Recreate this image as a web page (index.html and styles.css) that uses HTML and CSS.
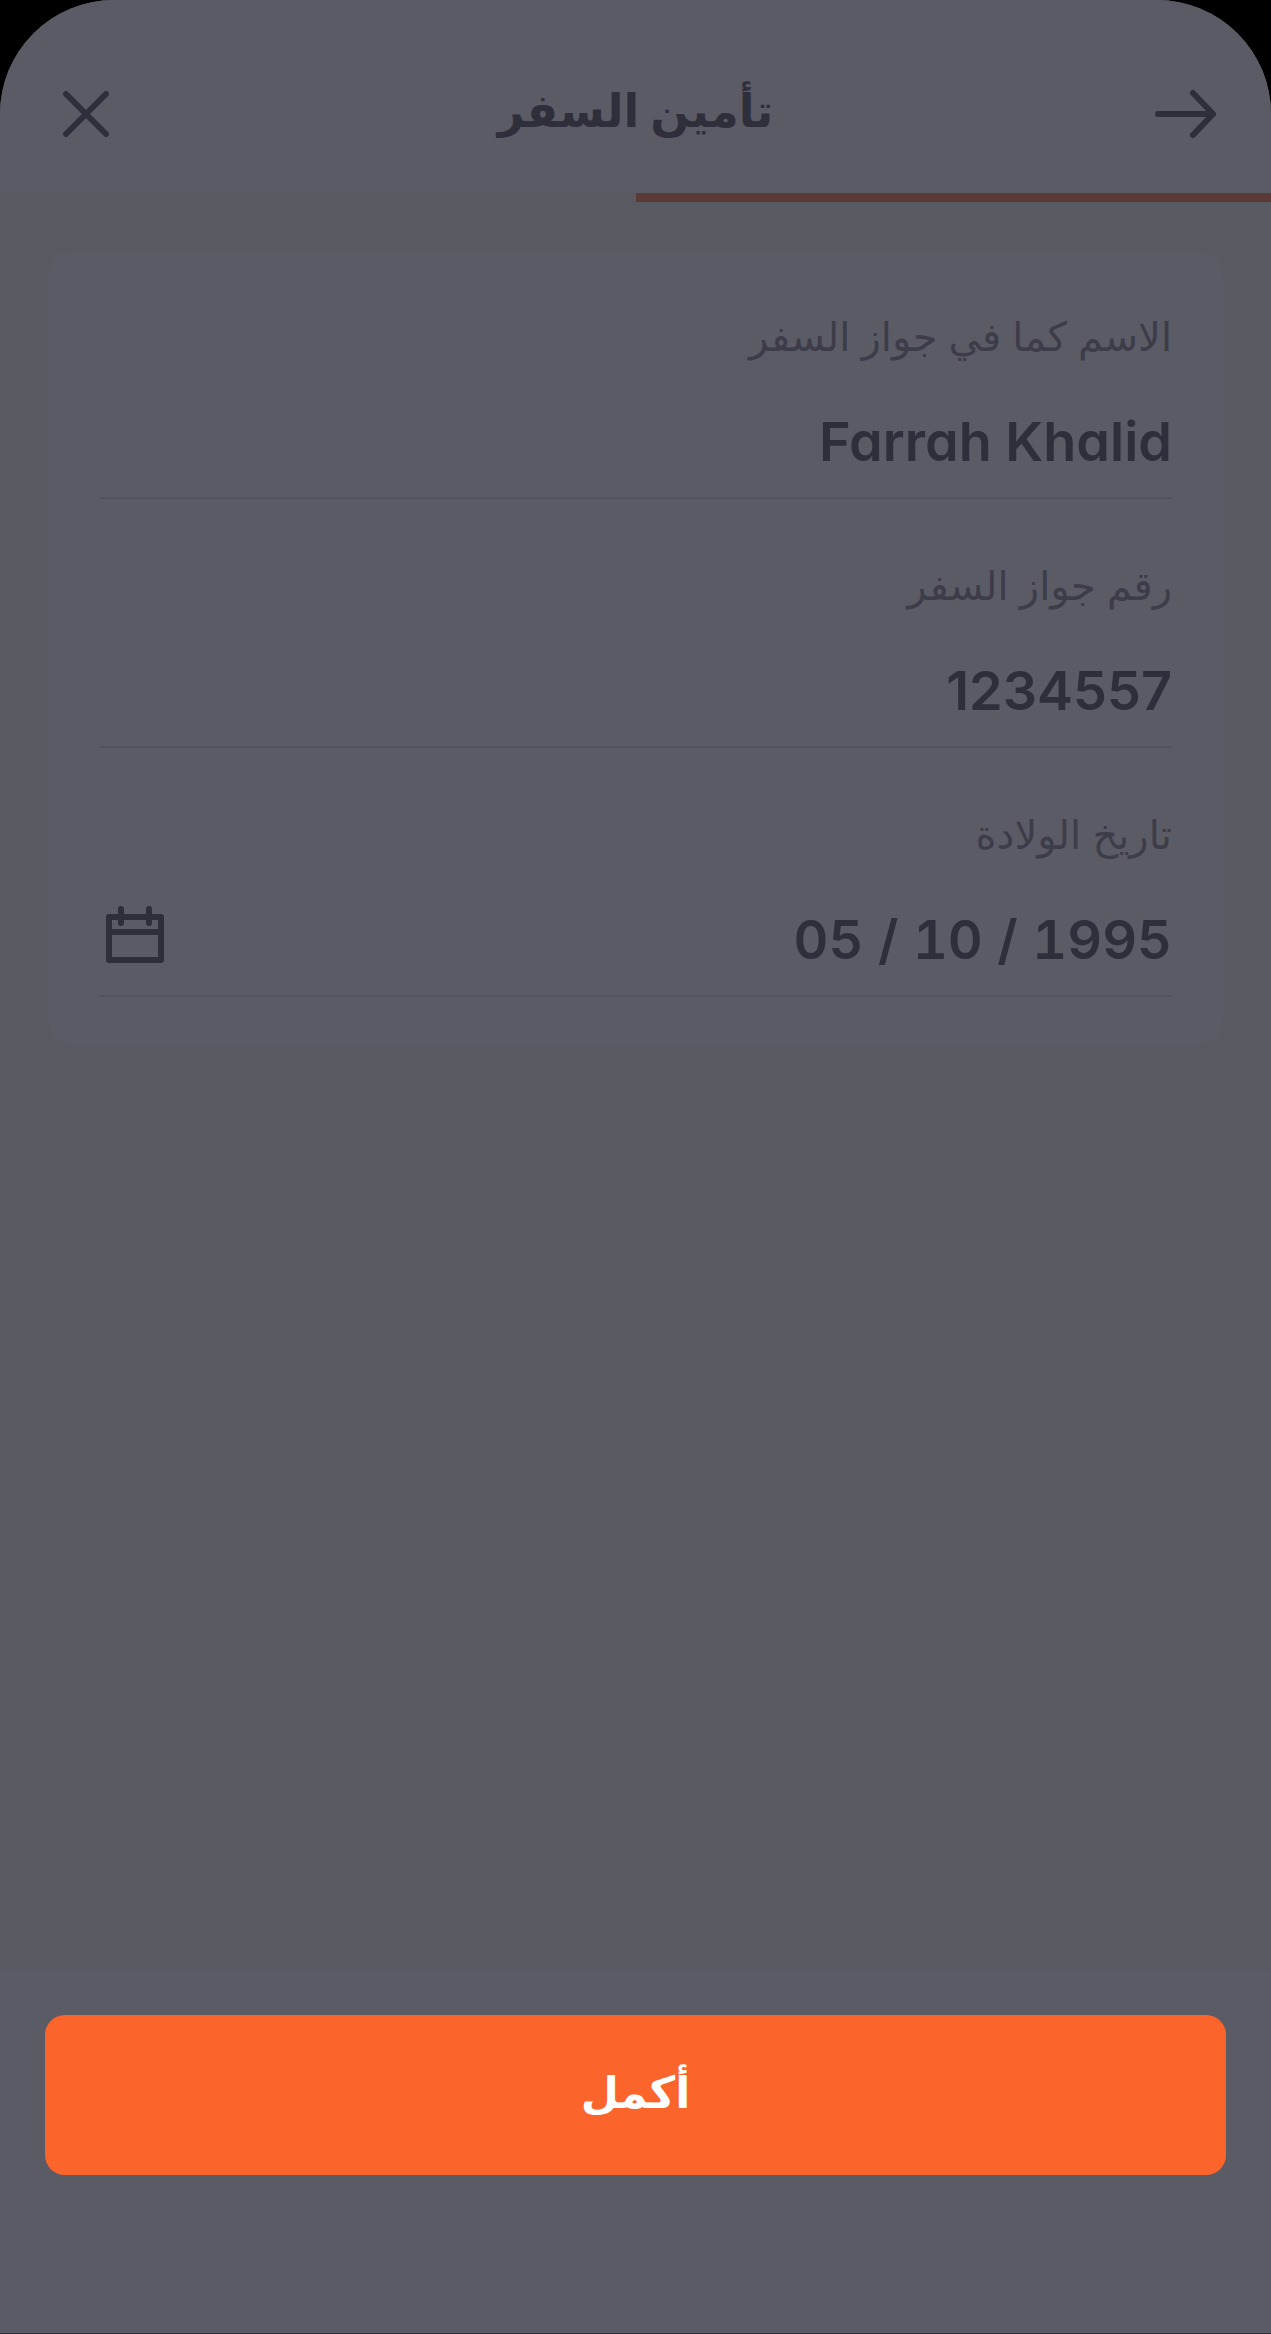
FILE: index.html
```html
<!doctype html>
<html lang="ar" dir="rtl">
<head>
  <meta charset="UTF-8">
  <meta name="viewport" content="width=device-width, initial-scale=1.0">
  <title>تأمين السفر</title>
  <link rel="stylesheet" href="styles.css">
</head>
<body>
  <main class="sheet">
    <header class="top-bar">
      <button type="button" class="icon-btn" aria-label="رجوع">
        <svg width="64" height="52" viewBox="0 0 64 52"><path d="M5 26H60M40 5L60 26L40 47"/></svg>
      </button>
      <h1>تأمين السفر</h1>
      <button type="button" class="icon-btn" aria-label="إغلاق">
        <svg width="48" height="48" viewBox="0 0 48 48"><path d="M4 4L44 44M44 4L4 44"/></svg>
      </button>
    </header>
    <div class="progress"><div class="progress-fill"></div></div>

    <form class="card" id="traveler-form">
      <div class="field">
        <label for="full-name">الاسم كما في جواز السفر</label>
        <div class="field-row">
          <input type="text" id="full-name" value="Farrah Khalid">
        </div>
      </div>
      <div class="field">
        <label for="passport">رقم جواز السفر</label>
        <div class="field-row">
          <input type="text" id="passport" value="1234557">
        </div>
      </div>
      <div class="field">
        <label for="birth-date">تاريخ الولادة</label>
        <div class="field-row">
          <input type="text" id="birth-date" class="date-input" value="05 / 10 / 1995">
          <button type="button" class="calendar-btn" aria-label="اختر التاريخ">
            <svg width="60" height="60" viewBox="0 0 60 60"><path d="M4 12H56V55H4ZM4 27H56M16 4V18M44 4V18"/></svg>
          </button>
        </div>
      </div>
    </form>

    <footer class="bottom-bar">
      <button type="submit" form="traveler-form" class="submit-btn">أكمل</button>
    </footer>
  </main>
</body>
</html>
```
FILE: styles.css
```css
* {
  box-sizing: border-box;
}
body {
  margin: 0;
  background: #000;
  color: #2f2e3b;
  font-family: Inter, "DejaVu Sans", sans-serif;
}
button {
  padding: 0;
  border: none;
  background: none;
  color: inherit;
  font-family: inherit;
  cursor: pointer;
}
svg {
  display: block;
  fill: none;
  stroke: currentColor;
  stroke-width: 6;
  stroke-linecap: round;
  stroke-linejoin: round;
}
.sheet {
  display: flex;
  flex-direction: column;
  min-height: 100vh;
  overflow: hidden;
  background: #595961;
  border-bottom: 1px solid #2f2e3b;
  border-radius: 114px 114px 0 0;
}
.top-bar {
  display: flex;
  align-items: center;
  justify-content: space-between;
  height: 193px;
  padding: 34px 52px 0;
  background: #5b5b66;
}
.icon-btn {
  display: flex;
  justify-content: center;
  width: 68px;
}
h1 {
  margin: 0;
  padding-bottom: 8px;
  font-size: 46px;
  line-height: 80px;
  font-weight: bold;
}
.progress {
  height: 9px;
}
.progress-fill {
  width: 50%;
  height: 100%;
  background: #5b3936;
}
.card {
  margin: 49px 48px 0;
  padding: 51px 51px 48px;
  background: #5b5b66;
  border-radius: 24px;
}
.field {
  border-bottom: 2px solid #53525d;
}
.field + .field {
  margin-top: 52px;
}
.field label {
  display: block;
  color: #3d3c49;
  font-size: 40px;
  line-height: 70px;
}
.field-row {
  display: flex;
  align-items: center;
  height: 125px;
  padding-top: 14px;
}
.field input {
  flex: 1;
  min-width: 0;
  padding: 0;
  border: none;
  outline: none;
  background: none;
  color: inherit;
  direction: ltr;
  text-align: right;
  font-family: inherit;
  font-feature-settings: "cv11";
  font-size: 54px;
  font-weight: 600;
}
.field .date-input {
  font-variant-numeric: tabular-nums;
}
.calendar-btn {
  margin: 0 0 10px 6px;
}
.bottom-bar {
  margin-top: auto;
  padding: 45px 45px 158px;
  background: #5b5b66;
}
.submit-btn {
  display: block;
  width: 100%;
  height: 160px;
  padding-bottom: 6px;
  border-radius: 20px;
  background: #fb642a;
  color: #fff;
  font-size: 44px;
  font-weight: bold;
}
```
